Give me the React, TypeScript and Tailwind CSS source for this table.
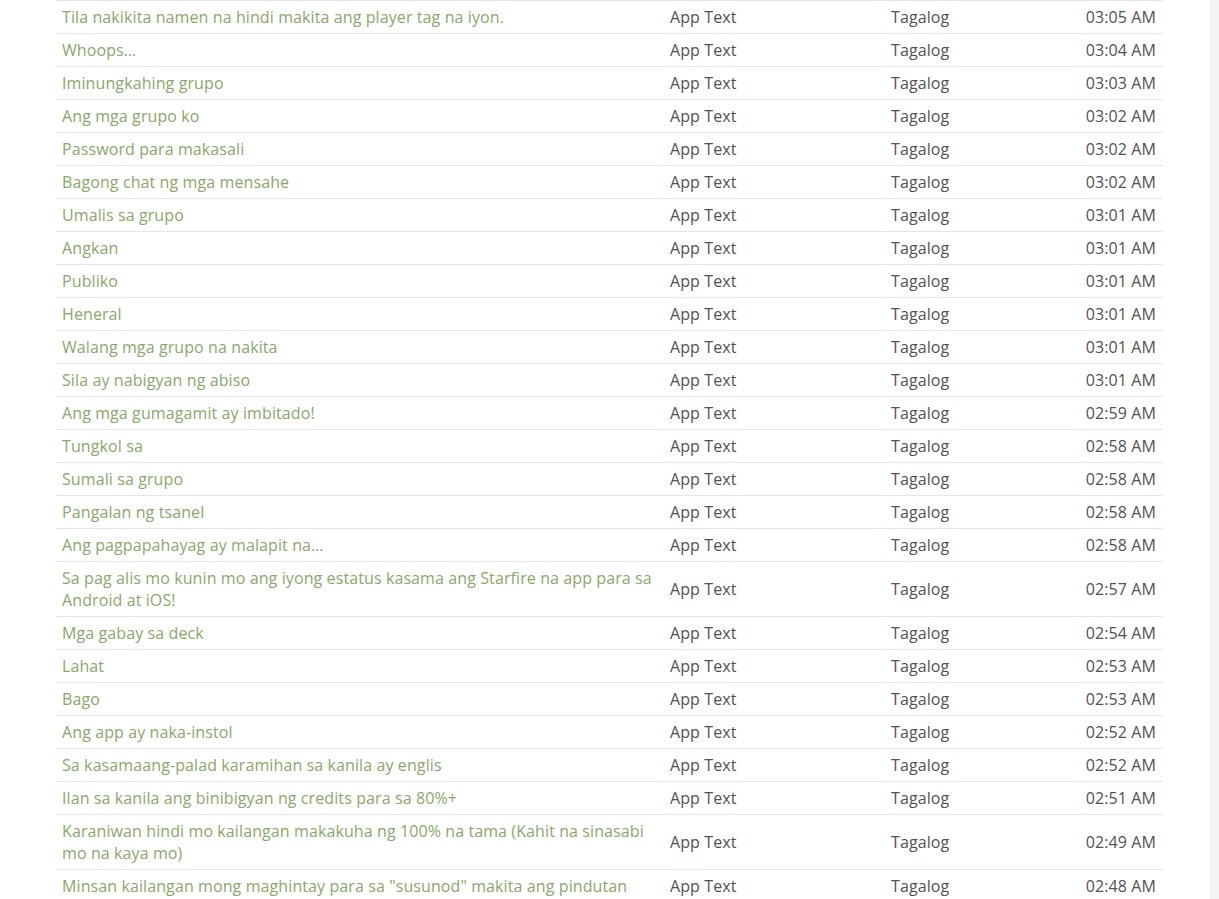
const rows: [string, string][] = [
  ['Tila nakikita namen na hindi makita ang player tag na iyon.', '03:05 AM'],
  ['Whoops…', '03:04 AM'],
  ['Iminungkahing grupo', '03:03 AM'],
  ['Ang mga grupo ko', '03:02 AM'],
  ['Password para makasali', '03:02 AM'],
  ['Bagong chat ng mga mensahe', '03:02 AM'],
  ['Umalis sa grupo', '03:01 AM'],
  ['Angkan', '03:01 AM'],
  ['Publiko', '03:01 AM'],
  ['Heneral', '03:01 AM'],
  ['Walang mga grupo na nakita', '03:01 AM'],
  ['Sila ay nabigyan ng abiso', '03:01 AM'],
  ['Ang mga gumagamit ay imbitado!', '02:59 AM'],
  ['Tungkol sa', '02:58 AM'],
  ['Sumali sa grupo', '02:58 AM'],
  ['Pangalan ng tsanel', '02:58 AM'],
  ['Ang pagpapahayag ay malapit na…', '02:58 AM'],
  ['Sa pag alis mo kunin mo ang iyong estatus kasama ang Starfire na app para sa Android at iOS!', '02:57 AM'],
  ['Mga gabay sa deck', '02:54 AM'],
  ['Lahat', '02:53 AM'],
  ['Bago', '02:53 AM'],
  ['Ang app ay naka-instol', '02:52 AM'],
  ['Sa kasamaang-palad karamihan sa kanila ay englis', '02:52 AM'],
  ['Ilan sa kanila ang binibigyan ng credits para sa 80%+', '02:51 AM'],
  ['Karaniwan hindi mo kailangan makakuha ng 100% na tama (Kahit na sinasabi mo na kaya mo)', '02:49 AM'],
  ['Minsan kailangan mong maghintay para sa "susunod" makita ang pindutan', '02:48 AM'],
]

export default function App() {
  return (
    <div className="flex h-[899px] overflow-hidden bg-white font-['Open_Sans',sans-serif] text-[16px] leading-[22px] tracking-[0.1px]">
      <div className="flex-1 pl-[56px]">
        <table className="w-[1107px] table-fixed border-collapse">
          <colgroup>
            <col className="w-[608px]" />
            <col className="w-[221px]" />
            <col className="w-[150px]" />
            <col />
          </colgroup>
          <tbody>
            {rows.map(([text, time], i) => (
              <tr key={i} className="border-t border-[#e6e6e6] align-middle">
                <td className="px-[6px] py-[5px] text-[#89a86a]">{text}</td>
                <td className="px-[6px] py-[5px] text-[#525252]">App Text</td>
                <td className="px-[6px] py-[5px] text-[#525252]">Tagalog</td>
                <td className="px-[7px] py-[5px] text-right text-[#525252]">{time}</td>
              </tr>
            ))}
          </tbody>
        </table>
      </div>
      <div className="w-[9px] shrink-0 bg-[#f3f3f3]" />
    </div>
  )
}
